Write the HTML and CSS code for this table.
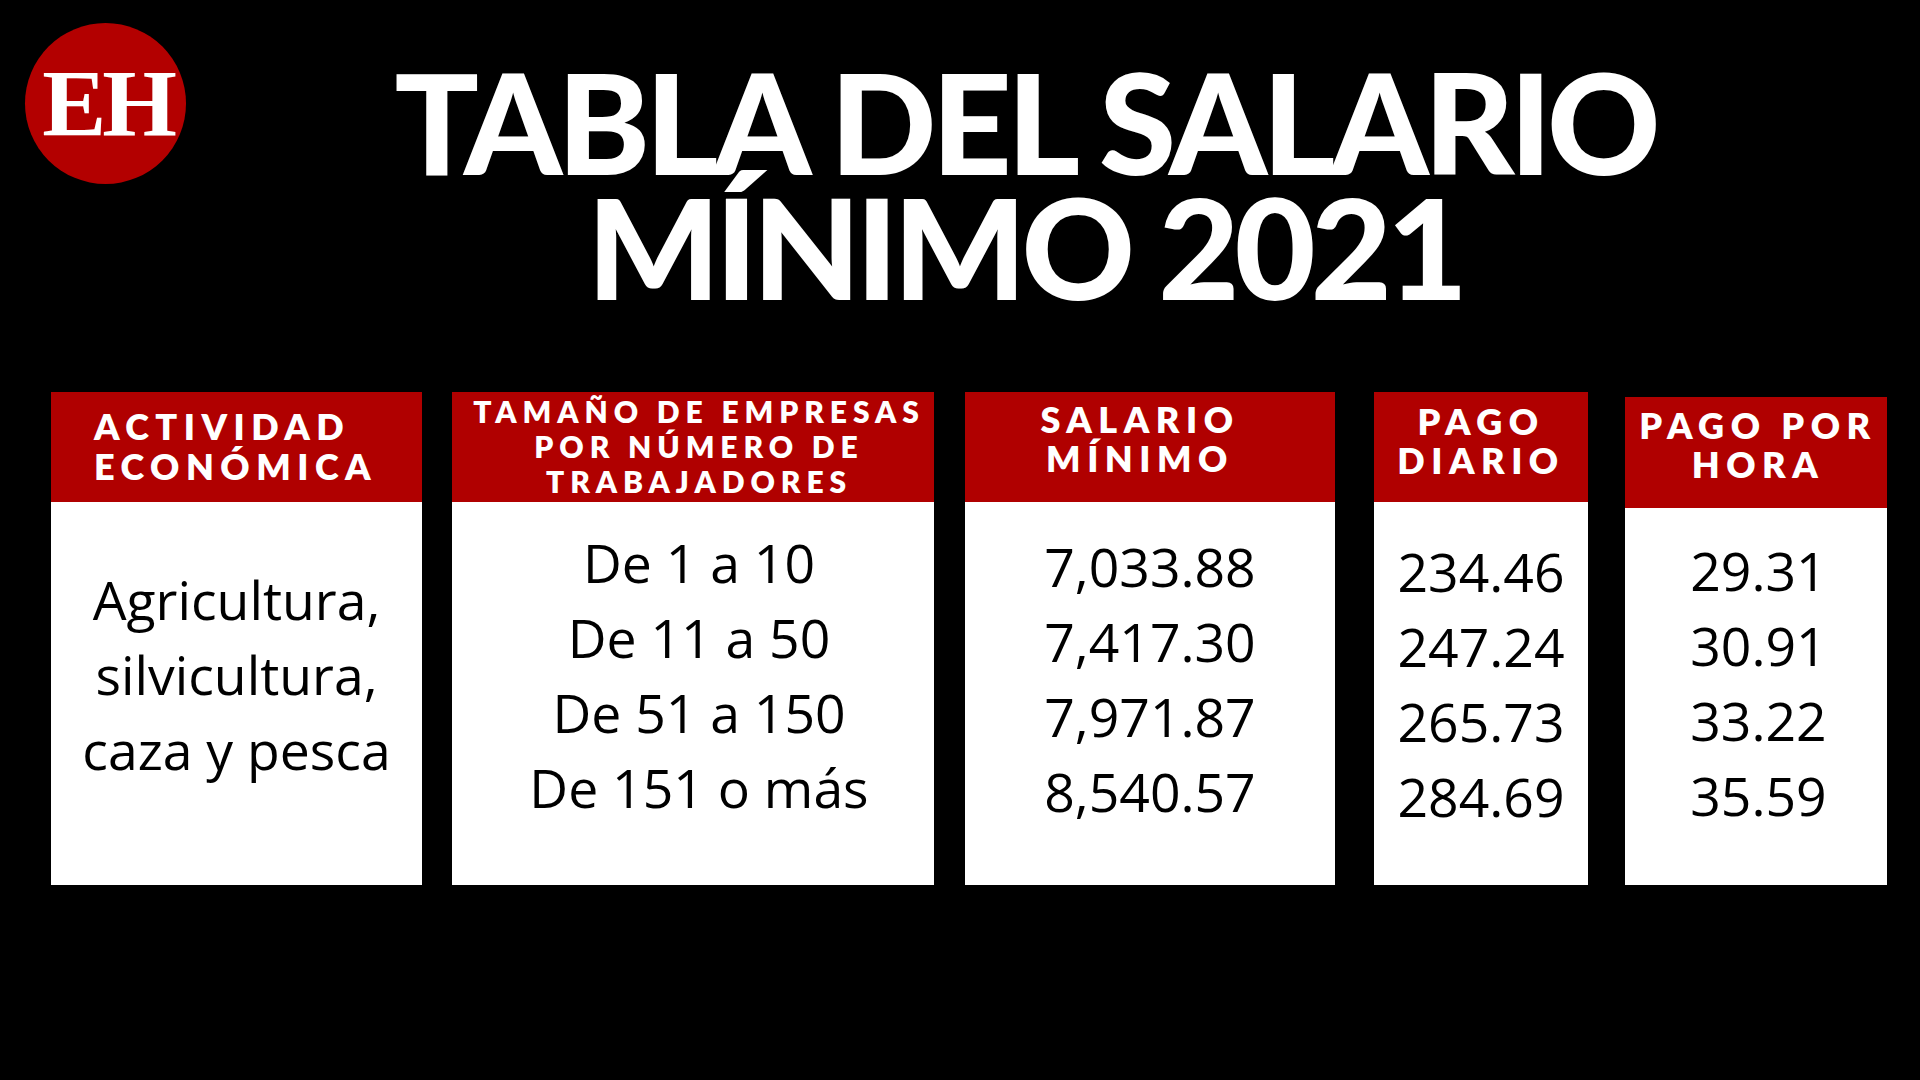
FILE: index.html
```html
<!DOCTYPE html>
<html lang="es">
<head>
<meta charset="utf-8">
<title>Tabla del salario mínimo 2021</title>
<link rel="stylesheet" href="styles.css">
</head>
<body>
<main class="poster">
  <header class="top">
    <div class="logo"><span class="logo-text">EH</span></div>
    <h1 class="title">TABLA DEL SALARIO<br>MÍNIMO 2021</h1>
  </header>
  <section class="table">
    <div class="col col-1">
      <div class="head head-1">ACTIVIDAD<br>ECONÓMICA</div>
      <div class="body body-1">Agricultura,<br>silvicultura,<br>caza y pesca</div>
    </div>
    <div class="col col-2">
      <div class="head head-2">TAMAÑO DE EMPRESAS<br>POR NÚMERO DE<br>TRABAJADORES</div>
      <div class="body body-2">De 1 a 10<br>De 11 a 50<br>De 51 a 150<br>De 151 o más</div>
    </div>
    <div class="col col-3">
      <div class="head head-3">SALARIO<br>MÍNIMO</div>
      <div class="body body-3">7,033.88<br>7,417.30<br>7,971.87<br>8,540.57</div>
    </div>
    <div class="col col-4">
      <div class="head head-4">PAGO<br>DIARIO</div>
      <div class="body body-4">234.46<br>247.24<br>265.73<br>284.69</div>
    </div>
    <div class="col col-5">
      <div class="head head-5">PAGO POR<br>HORA</div>
      <div class="body body-5">29.31<br>30.91<br>33.22<br>35.59</div>
    </div>
  </section>
</main>
</body>
</html>
```

FILE: styles.css
```css
html, body {
  margin: 0;
  padding: 0;
  background: #000;
}

.poster {
  width: 1920px;
  height: 1080px;
  background: #000;
  overflow: hidden;
}

.top {
  display: flex;
  align-items: flex-start;
  height: 369px;
  padding: 23px 0 0 25px;
}

.logo {
  width: 161px;
  height: 161px;
  flex: none;
  border-radius: 50%;
  background: #b30000;
  display: flex;
  align-items: center;
  justify-content: center;
}

.logo-text {
  font-family: "Liberation Serif", "Times New Roman", serif;
  font-weight: 700;
  font-size: 96px;
  line-height: 1;
  color: #fff;
  letter-spacing: -4px;
  margin-right: -4px;
}

.title {
  flex: 1;
  margin: 36px 0 0;
  padding-right: 56px;
  text-align: center;
  font-family: Lato, "Open Sans", sans-serif;
  font-weight: 900;
  font-size: 140px;
  line-height: 125px;
  letter-spacing: -5px;
  color: #fff;
}

.table {
  display: flex;
  align-items: flex-start;
  padding-left: 51px;
}

.col {
  display: flex;
  flex-direction: column;
  height: 493px;
}

.col-1 { width: 371px; margin-right: 30px; }
.col-2 { width: 482px; margin-right: 31px; }
.col-3 { width: 370px; margin-right: 39px; }
.col-4 { width: 214px; margin-right: 37px; }
.col-5 { width: 262px; margin-top: 5px; height: 488px; }

.head {
  background: #b00000;
  color: #fff;
  font-family: Lato, "Open Sans", sans-serif;
  font-weight: 800;
  font-size: 36px;
  line-height: 39px;
  letter-spacing: 6.5px;
  height: 110px;
  box-sizing: border-box;
  text-align: center;
  white-space: nowrap;
  overflow: hidden;
  flex: none;
}

.head-1 {
  text-align: left;
  line-height: 40px;
  padding: 14px 0 0 43px;
}

.head-2 {
  font-size: 30px;
  line-height: 35px;
  letter-spacing: 5.9px;
  padding: 2px 0 0 12px;
}

.head-3 {
  padding: 8px 20px 0 0;
}

.head-4 {
  padding: 10px 0 0 0;
}

.head-5 {
  height: 111px;
  padding: 9px 0 0 4px;
}

.body {
  flex: 1;
  background: #fff;
  color: #000;
  font-family: "Open Sans", "Liberation Sans", sans-serif;
  font-weight: 400;
  font-size: 53.5px;
  line-height: 75px;
  text-align: center;
  display: flex;
  align-items: center;
  justify-content: center;
  box-sizing: border-box;
}

.body-1 { padding-bottom: 38px; }
.body-2 { padding: 0 0 38px 12px; }
.body-3 { padding-bottom: 30px; }
.body-4 { padding-bottom: 20px; }
.body-5 { padding: 0 0 28px 5px; }
```
